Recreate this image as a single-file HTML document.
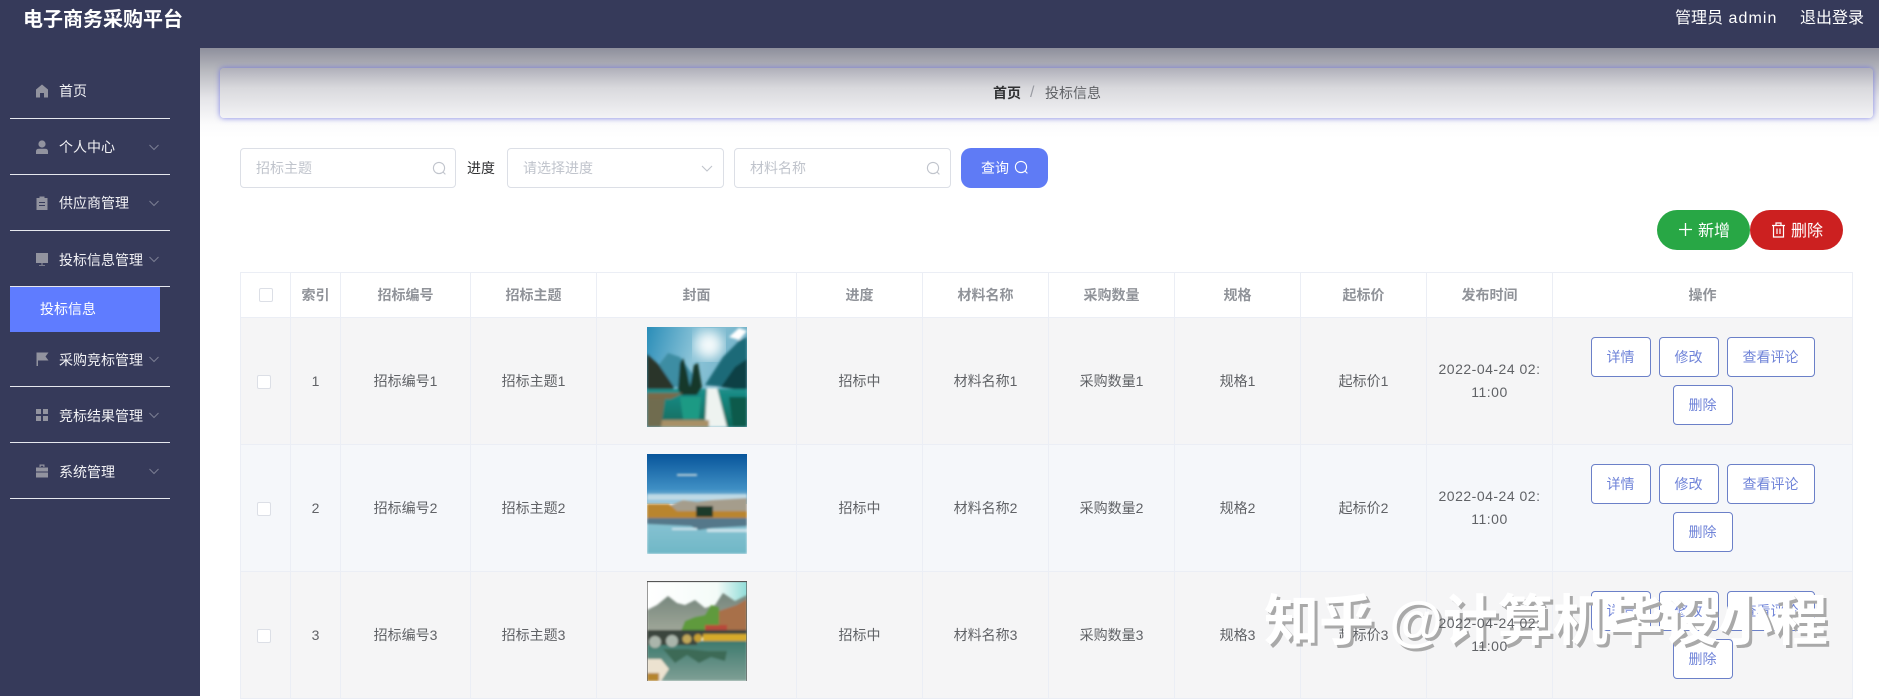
<!DOCTYPE html>
<html lang="zh"><head><meta charset="utf-8"><title>电子商务采购平台</title>
<style>
*{box-sizing:border-box}
html,body{margin:0;padding:0;width:1879px;height:696px;overflow:hidden;background:#fff;font-family:"Liberation Sans","Noto Sans CJK SC",sans-serif;font-size:14px;color:#606266}
.a{position:absolute}
.t{position:absolute;white-space:nowrap;line-height:20px}
#top{left:0;top:0;width:1879px;height:48px;background:#363a5a;z-index:3}
#side{left:0;top:48px;width:200px;height:648px;background:#363a5a;z-index:2}
#main{left:200px;top:48px;width:1679px;height:90px;background:linear-gradient(#8e8f9c 0,#b6b7bd 24%,#e4e4e8 55%,#fbfbfc 85%,#fff 100%)}
.line{position:absolute;left:10px;width:160px;height:1px;background:#e6e7ee}
.m{position:absolute;left:59px;color:#f2f2f5;white-space:nowrap;line-height:20px;font-size:14px}
.ic{position:absolute;left:35px;width:14px;height:14px}
.ch{position:absolute;left:148px;width:12px;height:12px}
#crumb{left:220px;top:68px;width:1653px;height:50px;border-radius:4px;background:linear-gradient(#b0b0ba 0,#d9d9dd 40%,#f3f3f5 100%);box-shadow:0 0 6px rgba(90,95,225,.75)}
.inp{position:absolute;top:148px;height:40px;background:#fff;border:1px solid #dcdfe6;border-radius:4px}
.ph{position:absolute;top:158px;color:#c0c4cc;line-height:20px;white-space:nowrap}
#tb{position:absolute;left:240px;top:272px;width:1612px;border-collapse:collapse;table-layout:fixed}
#tb th{height:45px;padding:0;background:#fff;color:#909399;font-weight:bold;text-align:center;border:1px solid #ebeef5;font-size:14px}
#tb td{height:127px;padding:0;text-align:center;border:1px solid #ebeef5;color:#606266;font-size:14px;line-height:23px}
tr.o td{background:#f5f5f6}
tr.e td{background:#f5f7fa}
.cb{display:inline-block;width:14px;height:14px;background:#fff;border:1px solid #dcdfe6;border-radius:2px;position:relative;left:-2px;top:3px}
th .cb{left:0;top:1px}
.dt{letter-spacing:.5px}
.up{position:relative;z-index:6}
.ops{display:flex;flex-wrap:wrap;justify-content:center;gap:8px;width:240px;margin:0 auto}
.b{display:block;width:60px;height:40px;line-height:38px;border:1px solid #6b80c8;border-radius:4px;background:#fff;color:#6f83d8;font-size:14px}
.b.w{width:88px}
.pic{display:block;width:100px;height:100px;margin:0 auto;position:relative;top:-4px}
.pill{position:absolute;top:210px;height:40px;width:93px;border-radius:20px;color:#fff;font-size:16px;line-height:40px}
#wm{position:absolute;left:1264px;top:582px;font-size:55px;line-height:78px;font-weight:bold;color:#fff;text-shadow:3px 3px 0 #a9a9a9;white-space:nowrap;z-index:5;letter-spacing:0}
</style></head><body>

<div id="top" class="a">
<div class="t" style="left:23px;top:5px;font-size:20px;line-height:30px;font-weight:bold;color:#fff">电子商务采购平台</div>
<div class="t" style="left:1675px;top:7px;font-size:16px;line-height:24px;color:#fff">管理员 <span style="letter-spacing:1.1px;margin-left:1px">admin</span></div>
<div class="t" style="left:1800px;top:7px;font-size:16px;line-height:24px;color:#fff">退出登录</div>
</div>

<div id="side" class="a" style="top:0;height:696px;padding:0">
<svg class="ic" style="top:84px" viewBox="0 0 14 14"><path fill="#92939f" d="M7 0.5 L13 5.5 V13.5 H9 V9 H5 V13.5 H1 V5.5 Z"/></svg>
<div class="m" style="top:81px">首页</div><div class="line" style="top:118px"></div>

<svg class="ic" style="top:140px" viewBox="0 0 14 14"><circle cx="7" cy="4" r="3.6" fill="#92939f"/><path fill="#92939f" d="M1 14 V11.5 Q1 8.8 4 8.8 H10 Q13 8.8 13 11.5 V14 Z"/></svg>
<div class="m" style="top:137px">个人中心</div>
<svg class="ch" style="top:141px" viewBox="0 0 12 12"><path fill="none" stroke="#7b7e93" stroke-width="1" d="M1.5 4 L6 8.5 L10.5 4"/></svg>
<div class="line" style="top:174px"></div>

<svg class="ic" style="top:196px" viewBox="0 0 14 14"><path fill="#92939f" d="M1.5 2 H4.5 V0.5 H9.5 V2 H12.5 V14 H1.5 Z"/><path fill="#363a5a" d="M4 6 H10 V7 H4 Z M4 9 H10 V10 H4 Z"/></svg>
<div class="m" style="top:193px">供应商管理</div>
<svg class="ch" style="top:197px" viewBox="0 0 12 12"><path fill="none" stroke="#7b7e93" stroke-width="1" d="M1.5 4 L6 8.5 L10.5 4"/></svg>
<div class="line" style="top:230px"></div>

<svg class="ic" style="top:252px" viewBox="0 0 14 14"><path fill="#92939f" d="M1 1 H13 V11 H1 Z"/><path fill="#92939f" d="M6.5 11 H7.5 V13 H10 V13.8 H4 V13 H6.5 Z"/></svg>
<div class="m" style="top:250px">投标信息管理</div>
<svg class="ch" style="top:253px" viewBox="0 0 12 12"><path fill="none" stroke="#7b7e93" stroke-width="1" d="M1.5 4 L6 8.5 L10.5 4"/></svg>
<div class="line" style="top:286px"></div>

<div class="a" style="left:10px;top:287px;width:150px;height:45px;background:#5f7cff"></div>
<div class="m" style="left:40px;top:299px;color:#fff">投标信息</div>

<svg class="ic" style="top:352px" viewBox="0 0 14 14"><path fill="#92939f" d="M1.5 0.5 H13.5 L10.5 4.5 L13.5 8.5 H3 V14 H1.5 Z"/></svg>
<div class="m" style="top:350px">采购竞标管理</div>
<svg class="ch" style="top:353px" viewBox="0 0 12 12"><path fill="none" stroke="#7b7e93" stroke-width="1" d="M1.5 4 L6 8.5 L10.5 4"/></svg>
<div class="line" style="top:386px"></div>

<svg class="ic" style="top:408px" viewBox="0 0 14 14"><path fill="#92939f" d="M1 1 H6 V6 H1 Z M8 1 H13 V6 H8 Z M1 8 H6 V13 H1 Z M8 8 H13 V13 H8 Z"/></svg>
<div class="m" style="top:406px">竞标结果管理</div>
<svg class="ch" style="top:409px" viewBox="0 0 12 12"><path fill="none" stroke="#7b7e93" stroke-width="1" d="M1.5 4 L6 8.5 L10.5 4"/></svg>
<div class="line" style="top:442px"></div>

<svg class="ic" style="top:464px" viewBox="0 0 14 14"><path fill="#92939f" d="M4.5 3 V0.5 H9.5 V3 H8.3 V1.7 H5.7 V3 Z M1 3.5 H13 V7.5 H1 Z M1 8.5 H13 V13.5 H1 Z"/></svg>
<div class="m" style="top:462px">系统管理</div>
<svg class="ch" style="top:465px" viewBox="0 0 12 12"><path fill="none" stroke="#7b7e93" stroke-width="1" d="M1.5 4 L6 8.5 L10.5 4"/></svg>
<div class="line" style="top:498px"></div>
</div>

<div id="main" class="a"></div>
<div id="crumb" class="a"></div>
<div class="t" style="left:993px;top:83px;font-weight:bold;color:#303133">首页</div>
<div class="t" style="left:1030px;top:83px;color:#9a9ca3;font-size:16px">/</div>
<div class="t" style="left:1045px;top:83px;color:#606266">投标信息</div>

<div class="inp" style="left:240px;width:216px"></div>
<div class="ph" style="left:256px">招标主题</div>
<svg class="a" style="left:432px;top:161px" width="15" height="15" viewBox="0 0 15 15"><circle cx="7" cy="7" r="5.6" fill="none" stroke="#c0c4cc" stroke-width="1.1"/><path d="M11 11 L13.4 13.4" stroke="#c0c4cc" stroke-width="1.1"/></svg>
<div class="t" style="left:467px;top:158px;color:#303133">进度</div>
<div class="inp" style="left:507px;width:217px"></div>
<div class="ph" style="left:523px">请选择进度</div>
<svg class="a" style="left:700px;top:161px" width="14" height="14" viewBox="0 0 14 14"><path fill="none" stroke="#c0c4cc" stroke-width="1.1" d="M2 5 L7 10 L12 5"/></svg>
<div class="inp" style="left:734px;width:217px"></div>
<div class="ph" style="left:750px">材料名称</div>
<svg class="a" style="left:926px;top:161px" width="15" height="15" viewBox="0 0 15 15"><circle cx="7" cy="7" r="5.6" fill="none" stroke="#c0c4cc" stroke-width="1.1"/><path d="M11 11 L13.4 13.4" stroke="#c0c4cc" stroke-width="1.1"/></svg>
<div class="a" style="left:961px;top:148px;width:87px;height:40px;border-radius:10px;background:#5f7bf5"></div>
<div class="t" style="left:981px;top:158px;color:#fff">查询</div>
<svg class="a" style="left:1014px;top:160px" width="15" height="15" viewBox="0 0 15 15"><circle cx="7" cy="7" r="5.6" fill="none" stroke="#fff" stroke-width="1.1"/><path d="M11 11 L13.4 13.4" stroke="#fff" stroke-width="1.1"/></svg>

<div class="pill" style="left:1657px;background:#28a745"></div>
<svg class="a" style="left:1678px;top:222px" width="15" height="15" viewBox="0 0 15 15"><path d="M7.5 1 V14 M1 7.5 H14" stroke="#fff" stroke-width="1.3"/></svg>
<div class="t" style="left:1698px;top:222px;font-size:16px;color:#fff">新增</div>
<div class="pill" style="left:1750px;background:#cc2020"></div>
<svg class="a" style="left:1771px;top:222px" width="15" height="16" viewBox="0 0 15 16"><path fill="none" stroke="#fff" stroke-width="1.2" d="M1 3.5 H14 M5 3.5 V1 H10 V3.5 M2.5 3.5 V15 H12.5 V3.5 M6 6.5 V12 M9 6.5 V12"/></svg>
<div class="t" style="left:1791px;top:222px;font-size:16px;color:#fff">删除</div>

<table id="tb">
<colgroup><col style="width:50px"><col style="width:50px"><col style="width:130px"><col style="width:126px"><col style="width:200px"><col style="width:126px"><col style="width:126px"><col style="width:126px"><col style="width:126px"><col style="width:126px"><col style="width:126px"><col style="width:300px"></colgroup>
<tr><th><span class="cb"></span></th><th>索引</th><th>招标编号</th><th>招标主题</th><th>封面</th><th>进度</th><th>材料名称</th><th>采购数量</th><th>规格</th><th>起标价</th><th>发布时间</th><th>操作</th></tr>
<tr class="o"><td><span class="cb"></span></td><td>1</td><td>招标编号1</td><td>招标主题1</td><td>
<svg class="pic" viewBox="0 0 100 100"><defs><linearGradient id="s1" x1="0" y1="0" x2="1" y2="0.3"><stop offset="0" stop-color="#2a8db8"/><stop offset=".5" stop-color="#8cc4d8"/><stop offset="1" stop-color="#6fb0c6"/></linearGradient><linearGradient id="w1" x1="0" y1="0" x2="0" y2="1"><stop offset="0" stop-color="#1b8f8a"/><stop offset="1" stop-color="#0f6a5c"/></linearGradient><filter id="b1"><feGaussianBlur stdDeviation="1.4"/></filter><filter id="g1"><feGaussianBlur stdDeviation="6"/></filter><clipPath id="c1"><rect width="100" height="100"/></clipPath></defs><g clip-path="url(#c1)"><rect width="100" height="100" fill="url(#s1)"/><circle cx="62" cy="18" r="14" fill="#f6fbfc" filter="url(#g1)"/><g filter="url(#b1)"><path fill="#fff" d="M82 10 L92 1 L100 4 L92 13 Z"/><path fill="#3d8da3" d="M10 40 L21 26 L33 30 L55 60 H10 Z"/><path fill="#1e6a78" d="M58 58 L76 30 L92 14 L100 10 V62 Z"/><path fill="#0f3f44" d="M74 60 L88 40 L100 32 V64 Z"/><path fill="#2b362b" d="M0 27 L12 38 L27 60 L25 64 H0 Z"/><rect y="62" width="100" height="38" fill="url(#w1)"/><path fill="#17382c" d="M31 62 L33 36 L36 31 L40 44 L43 60 L47 38 L51 36 L55 60 L50 68 H34 Z"/><path fill="#1c9a84" d="M33 70 H54 L52 92 H36 Z"/><path fill="#eef3f0" d="M60 61 H70 L80 100 H58 Z"/><path fill="#7a6a4a" d="M0 66 H36 L24 72 H0 Z"/><path fill="#a89066" d="M0 93 H62 V100 H0 Z"/><path fill="#6f6c50" d="M0 72 H18 L14 100 H0 Z"/><path fill="#0e5a4c" d="M82 70 H100 V100 H86 Z"/></g></g></svg></td><td>招标中</td><td>材料名称1</td><td>采购数量1</td><td>规格1</td><td>起标价1</td><td class="dt">2022-04-24 02:<br>11:00</td><td><div class="ops"><span class="b">详情</span><span class="b">修改</span><span class="b w">查看评论</span><span class="b">删除</span></div></td></tr>
<tr class="e"><td><span class="cb"></span></td><td>2</td><td>招标编号2</td><td>招标主题2</td><td>
<svg class="pic" viewBox="0 0 100 100"><defs><linearGradient id="s2" x1="0" y1="0" x2="0" y2="1"><stop offset="0" stop-color="#07559b"/><stop offset=".7" stop-color="#3f8fc4"/><stop offset="1" stop-color="#a8cfe0"/></linearGradient><linearGradient id="w2" x1="0" y1="0" x2="0" y2="1"><stop offset="0" stop-color="#8ac4d4"/><stop offset="1" stop-color="#6fb7c6"/></linearGradient><filter id="b2"><feGaussianBlur stdDeviation="1.1"/></filter><clipPath id="c2"><rect width="100" height="100"/></clipPath></defs><g clip-path="url(#c2)"><rect width="100" height="50" fill="url(#s2)"/><g filter="url(#b2)"><rect y="40" width="100" height="6" fill="#cfe3ea" opacity=".8"/><path fill="#b9cfd8" d="M30 20 H50 V22 H30 Z"/><path fill="#a59d8c" d="M22 52 L36 46 L50 48 L65 46 L100 44 V58 H22 Z"/><path fill="#b9852e" d="M0 50 H22 L30 57 H100 V64 H0 Z"/><path fill="#1f3a2a" d="M49 52 H66 V63 H49 Z"/><rect y="64" width="100" height="36" fill="url(#w2)"/><path fill="#55788a" d="M0 64 H100 V72 L65 74 L52 76 L44 72 L0 70 Z"/><path fill="#c9e2ea" d="M25 74 H50 V76 H25 Z M60 75 H100 V78 H60 Z"/></g></g></svg></td><td>招标中</td><td>材料名称2</td><td>采购数量2</td><td>规格2</td><td>起标价2</td><td class="dt">2022-04-24 02:<br>11:00</td><td><div class="ops"><span class="b">详情</span><span class="b">修改</span><span class="b w">查看评论</span><span class="b">删除</span></div></td></tr>
<tr class="o"><td><span class="cb"></span></td><td>3</td><td>招标编号3</td><td>招标主题3</td><td>
<svg class="pic" viewBox="0 0 100 100"><defs><linearGradient id="s3" x1="0" y1="0" x2="1" y2="0"><stop offset="0" stop-color="#fff"/><stop offset=".7" stop-color="#f4fbf8"/><stop offset="1" stop-color="#90dcd8"/></linearGradient><linearGradient id="w3" x1="0" y1="0" x2="0" y2="1"><stop offset="0" stop-color="#3d7a6e"/><stop offset="1" stop-color="#7f9f95"/></linearGradient><linearGradient id="m3" x1="0" y1="0" x2="0" y2="1"><stop offset="0" stop-color="#74857c"/><stop offset="1" stop-color="#a5ab9c"/></linearGradient><filter id="b3"><feGaussianBlur stdDeviation="1"/></filter><clipPath id="c3"><rect width="100" height="100"/></clipPath></defs><g clip-path="url(#c3)"><rect width="100" height="60" fill="url(#s3)"/><g filter="url(#b3)"><path fill="url(#m3)" d="M0 29 L10 24 L21 15 L30 22 L38 24 L48 19 L58 27 L68 24 L76 12 L88 20 L100 14 V55 H0 Z"/><path fill="#5f9a3c" d="M34 50 L38 40 L48 36 L58 34 L64 24 L72 26 L74 50 Z"/><path fill="#a8704a" d="M72 30 L90 24 L100 18 V50 H72 Z"/><path fill="#b84a3a" d="M58 44 H80 V49 H58 Z"/><rect y="60" width="100" height="40" fill="url(#w3)"/><rect y="49" width="100" height="7" fill="#3a443c"/><rect y="56" width="50" height="8" fill="#3d463e"/><circle cx="8" cy="61" r="6" fill="#aab5ab"/><circle cx="25" cy="60" r="6" fill="#aab5ab"/><circle cx="40" cy="58" r="4.5" fill="#c3a85a"/><circle cx="51" cy="57" r="4" fill="#c9a030"/><path fill="#d6aa2a" d="M56 53 H100 V60 H56 Z"/><path fill="#3c6a56" d="M16 68 L40 68 L60 70 L80 70 L78 80 L64 76 L52 82 L40 74 L28 82 Z"/><path fill="#ece2d0" d="M0 78 H14 L22 88 L14 100 H0 Z"/><path fill="#b5852e" d="M0 92 H12 V100 H0 Z"/></g><path fill="none" stroke="#555" stroke-width="1.2" d="M0 100 V0.5 H100 V100"/></g></svg></td><td>招标中</td><td>材料名称3</td><td>采购数量3</td><td>规格3</td><td>起<span class="up">标价3</span></td><td class="dt"><span class="up">2022-04-24 02:<br>11:00</span></td><td><div class="ops"><span class="b">详情</span><span class="b">修改</span><span class="b w">查看评论</span><span class="b">删除</span></div></td></tr>
</table>

<div id="wm">知乎 @计算机毕设小程</div>
</body></html>
